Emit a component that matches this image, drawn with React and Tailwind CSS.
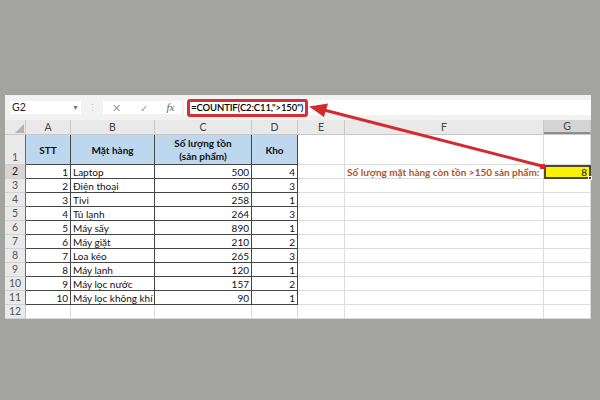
import React from "react";

const rows = [
    [1, "Laptop", 500, 4],
    [2, "Điện thoại", 650, 3],
    [3, "Tivi", 258, 1],
    [4, "Tủ lạnh", 264, 3],
    [5, "Máy sấy", 890, 1],
    [6, "Máy giặt", 210, 2],
    [7, "Loa kéo", 265, 3],
    [8, "Máy lạnh", 120, 1],
    [9, "Máy lọc nước", 157, 2],
    [10, "Máy lọc không khí", 90, 1],
];

const cols = [
    { key: "A", w: "w-[45px]" },
    { key: "B", w: "w-[84px]" },
    { key: "C", w: "w-[97px]" },
    { key: "D", w: "w-[46px]" },
    { key: "E", w: "w-[47px]" },
    { key: "F", w: "w-[199px]" },
    { key: "G", w: "w-[47px]" },
];

const dark = "border-r border-b border-[#454545]";
const light = "border-r border-b border-[#dcdcdc]";

const RowHead = ({ n, selected, tall }) => (
    <div
        className={`w-[21px] shrink-0 flex justify-center border-r border-b text-[10.5px] ${tall ? "items-end pb-[2px]" : "items-center"} ${n <= 11 ? "border-r-[#6a6a6a]" : "border-r-[#c4c4c4]"} border-b-[#d2d2d2] ${selected ? "bg-[#d6d6d6] text-[#222]" : "bg-[#e9e9e9] text-[#555]"}`}
    >
        {n}
    </div>
);

const App = () => {
    return (
        <div className="relative w-[600px] h-[400px] bg-[#a3a49f] pt-[95px] pl-[5px] font-['Lato','Noto_Sans',sans-serif] text-[10px] leading-none text-[#111]">
            <div className="w-[586px] bg-white">
                {/* formula bar */}
                <div className="h-[25px] bg-[#f2f2f2] flex items-center">
                    <div className="ml-[5px] w-[71px] h-[13px] bg-white flex items-center justify-between px-[2px] text-[10.5px] text-[#222]">
                        <span>G2</span>
                        <span className="text-[7px] text-[#777]">▼</span>
                    </div>
                    <div className="w-[22px] flex justify-center text-[#c2c2c2] text-[9px]">⋮</div>
                    <div className="w-[79px] h-[13px] bg-white flex items-center text-[#9a9a9a]">
                        <span className="w-[26px] text-center text-[11px]">✕</span>
                        <span className="w-[30px] text-center text-[10px]">✓</span>
                        <span className="flex-1 text-center italic font-['Liberation_Serif',serif] text-[11px] text-[#666]">fx</span>
                    </div>
                    <div className="ml-[2px] flex-1 h-[15px] bg-white flex items-center">
                        <div className="ml-[3px] w-[121px] h-[18px] border-[3px] border-[#d3313a] rounded-[3px] bg-white flex items-center pl-[1px] font-semibold text-[9.5px] tracking-[-0.1px] text-black whitespace-nowrap">
                            =COUNTIF(C2:C11,"&gt;150")
                        </div>
                    </div>
                </div>

                {/* column headers */}
                <div className="flex h-[15px] bg-[#e9e9e9] text-[10.5px] text-[#444] border-b border-[#c8c8c8]">
                    <div className="w-[21px] shrink-0 border-r border-[#c8c8c8] flex items-end justify-end p-[1px]">
                        <svg width="9" height="9" viewBox="0 0 9 9">
                            <polygon points="9,0 9,9 0,9" fill="#b4b4b4" />
                        </svg>
                    </div>
                    {cols.map((c) => (
                        <div
                            key={c.key}
                            className={`${c.w} shrink-0 flex items-center justify-center border-r border-[#c8c8c8] ${c.key === "G" ? "bg-[#d4d4d4] border-b-2 border-b-[#8c8c8c]" : ""}`}
                        >
                            {c.key}
                        </div>
                    ))}
                </div>

                {/* row 1 header */}
                <div className="flex h-[30px]">
                    <RowHead n={1} tall />
                    <div className={`w-[45px] shrink-0 ${dark} bg-[#bdd7ee] font-bold flex items-center justify-center`}>STT</div>
                    <div className={`w-[84px] shrink-0 ${dark} bg-[#bdd7ee] font-bold flex items-center justify-center`}>Mặt hàng</div>
                    <div className={`w-[97px] shrink-0 ${dark} bg-[#bdd7ee] font-bold flex flex-col items-center justify-center gap-[3px]`}>
                        <span>Số lượng tồn</span>
                        <span>(sản phẩm)</span>
                    </div>
                    <div className={`w-[46px] shrink-0 ${dark} bg-[#bdd7ee] font-bold flex items-center justify-center`}>Kho</div>
                    <div className={`w-[47px] shrink-0 ${light}`}></div>
                    <div className={`w-[199px] shrink-0 ${light}`}></div>
                    <div className={`w-[47px] shrink-0 ${light}`}></div>
                </div>

                {/* data rows */}
                {rows.map((r, i) => (
                    <div key={r[0]} className="flex h-[14px]">
                        <RowHead n={i + 2} selected={i === 0} />
                        <div className={`w-[45px] shrink-0 ${dark} flex items-center justify-end pr-[2px]`}>{r[0]}</div>
                        <div className={`w-[84px] shrink-0 ${dark} flex items-center pl-[2px] whitespace-nowrap`}>{r[1]}</div>
                        <div className={`w-[97px] shrink-0 ${dark} flex items-center justify-end pr-[2px]`}>{r[2]}</div>
                        <div className={`w-[46px] shrink-0 ${dark} flex items-center justify-end pr-[2px]`}>{r[3]}</div>
                        <div className={`w-[47px] shrink-0 ${light}`}></div>
                        {i === 0 ? (
                            <>
                                <div className={`w-[199px] shrink-0 ${light} flex items-center pl-[2px] font-bold text-[#ae5522] whitespace-nowrap`}>
                                    Số lượng mặt hàng còn tồn &gt;150 sản phẩm:
                                </div>
                                <div className="relative w-[47px] shrink-0 border-2 border-[#4b4a22] bg-[#fbf207] flex items-center justify-end pr-[2px]">
                                    8
                                    <span className="absolute -right-[3px] -bottom-[3px] w-[4px] h-[4px] bg-[#3d3d1a] border border-white"></span>
                                </div>
                            </>
                        ) : (
                            <>
                                <div className={`w-[199px] shrink-0 ${light}`}></div>
                                <div className={`w-[47px] shrink-0 ${light}`}></div>
                            </>
                        )}
                    </div>
                ))}

                {/* row 12 */}
                <div className="flex h-[14px]">
                    <RowHead n={12} />
                    {cols.map((c) => (
                        <div key={c.key} className={`${c.w} shrink-0 ${light}`}></div>
                    ))}
                </div>
            </div>

            {/* red annotation arrow */}
            <svg className="absolute inset-0 pointer-events-none" width="600" height="400" viewBox="0 0 600 400">
                <line x1="322" y1="109.5" x2="542" y2="166" stroke="#d22a30" strokeWidth="3" />
                <polygon points="309,106.5 328,103.5 324,117" fill="#d22a30" />
                <rect x="540" y="164" width="5" height="5" fill="#d22a30" />
            </svg>
        </div>
    );
};

export default App;
